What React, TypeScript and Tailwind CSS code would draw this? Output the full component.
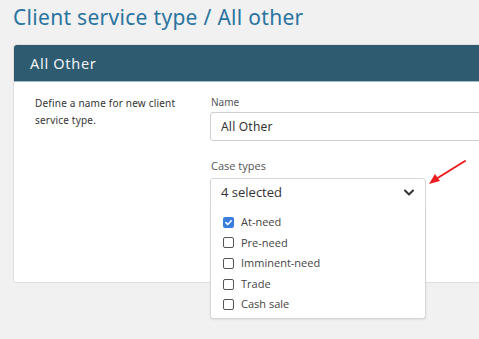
import React from 'react';

const caseTypes = [
  { label: 'At-need', checked: true },
  { label: 'Pre-need', checked: false },
  { label: 'Imminent-need', checked: false },
  { label: 'Trade', checked: false },
  { label: 'Cash sale', checked: false },
];

const Checkbox = ({ checked }: { checked: boolean }) =>
  checked ? (
    <span className="flex h-[11px] w-[11px] items-center justify-center rounded-[2px] bg-[#3b7ddd]">
      <svg width="9" height="9" viewBox="0 0 12 12" fill="none">
        <path d="M2.5 6.2l2.4 2.4 4.8-5" stroke="white" strokeWidth="2" strokeLinecap="round" strokeLinejoin="round" />
      </svg>
    </span>
  ) : (
    <span className="h-[11px] w-[11px] rounded-[2px] border-[1.5px] border-[#555] bg-white" />
  );

const App = () => {
  return (
    <div className="relative h-[339px] w-[479px] overflow-hidden bg-[#f1f1f1] pl-[13px] font-['Liberation_Sans',sans-serif]">
      <h1 className="pt-[2px] font-['Noto_Sans',sans-serif] text-[21px] leading-[30px] tracking-[0.3px] text-[#2a74a0]">
        Client service type / All other
      </h1>

      <div className="mt-[12px] w-[620px] rounded-[3px] border border-[#dedede] bg-white">
        <div className="h-[37px] rounded-t-[3px] border-b border-[#9fb9c6] bg-[#2f5b70] pl-[16px] font-['Noto_Sans',sans-serif] text-[14.5px] leading-[37px] tracking-[0.7px] text-[#eef3f5]">
          All Other
        </div>

        <div className="flex h-[200px] pt-[13px]">
          <p className="w-[196px] pl-[21px] pr-[8px] font-['Noto_Sans',sans-serif] text-[10px] leading-[17px] tracking-[0.2px] text-[#333]">
            Define a name for new client service type.
          </p>

          <div className="flex-1">
            <label className="block pl-[1px] font-['Noto_Sans',sans-serif] text-[10px] leading-[14px] text-[#555]">Name</label>
            <div className="mt-[3px] h-[29px] rounded-[3px] border border-[#cfcfcf] pl-[10px] font-['Noto_Sans',sans-serif] text-[12px] leading-[27px] tracking-[0.2px] text-[#333]">
              All Other
            </div>

            <label className="mt-[18px] block pl-[1px] font-['Open_Sans',sans-serif] text-[11px] leading-[14px] text-[#555]">Case types</label>
            <div className="relative mt-[5px] w-[216px]">
              <div className="flex h-[29px] items-center justify-between rounded-t-[3px] border border-[#d6d6d6] pl-[10px] pr-[11px] font-['Open_Sans',sans-serif] text-[13px] text-[#333]">
                <span>4 selected</span>
                <svg width="10" height="7" viewBox="0 0 10 6" fill="none">
                  <path d="M1 1l4 4 4-4" stroke="#333" strokeWidth="2" strokeLinecap="round" strokeLinejoin="round" />
                </svg>
              </div>
              <ul className="absolute left-0 top-[28px] z-10 w-[216px] rounded-b-[3px] border border-t-0 border-[#d6d6d6] bg-white pb-[3px] pt-[6px] shadow-[0_1px_2px_rgba(0,0,0,0.08)]">
                {caseTypes.map((t) => (
                  <li key={t.label} className="flex h-[20.6px] items-center gap-[7px] pl-[12px] font-['Open_Sans',sans-serif] text-[11px] text-[#444]">
                    <Checkbox checked={t.checked} />
                    <span>{t.label}</span>
                  </li>
                ))}
              </ul>
            </div>
          </div>
        </div>
      </div>

      <svg className="absolute left-[426px] top-[158px]" width="44" height="30" viewBox="0 0 44 30" fill="none">
        <path d="M39 3L10 21" stroke="#ee1c1c" strokeWidth="2" strokeLinecap="round" />
        <path d="M3 26l6-10 5 7z" fill="#ee1c1c" />
      </svg>
    </div>
  );
};

export default App;
